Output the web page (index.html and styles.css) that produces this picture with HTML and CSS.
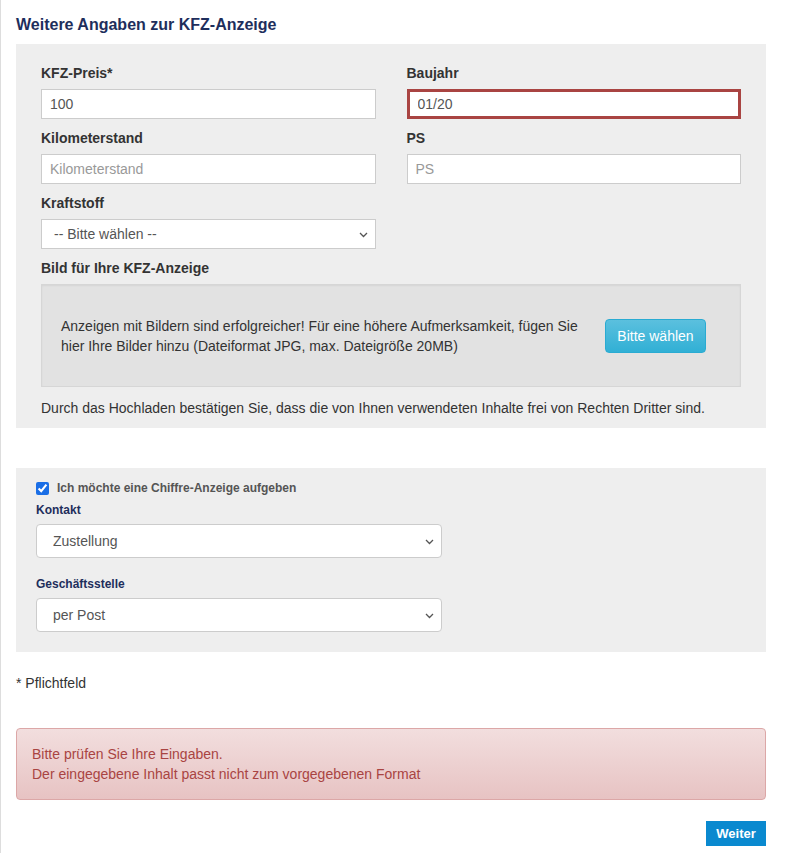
FILE: index.html
```html
<!DOCTYPE html>
<html lang="de">

<head>
    <meta charset="UTF-8">
    <meta name="viewport" content="width=device-width, initial-scale=1.0">
    <title>KFZ-Anzeige</title>
    <link rel="stylesheet" href="styles.css">
</head>

<body>
    <div class="seite">
        <h2 class="titel">Weitere Angaben zur KFZ-Anzeige</h2>

        <!-- Fahrzeugdaten -->
        <div class="panel panel-kfz">
            <div class="raster">
                <div class="feld">
                    <label>KFZ-Preis*</label>
                    <input type="text" value="100">
                </div>
                <div class="feld">
                    <label>Baujahr</label>
                    <input type="text" value="01/20" class="fehler">
                </div>
                <div class="feld">
                    <label>Kilometerstand</label>
                    <input type="text" placeholder="Kilometerstand">
                </div>
                <div class="feld">
                    <label>PS</label>
                    <input type="text" placeholder="PS">
                </div>
                <div class="feld">
                    <label>Kraftstoff</label>
                    <div class="auswahl">
                        <select>
                            <option>-- Bitte wählen --</option>
                            <option>Benzin</option>
                            <option>Diesel</option>
                            <option>Elektro</option>
                        </select>
                        <svg class="pfeil" width="9" height="6" viewBox="0 0 9 6"><path d="M1 1l3.5 3.5L8 1" fill="none" stroke="#555" stroke-width="1.3"/></svg>
                    </div>
                </div>
            </div>

            <label class="bild-label">Bild für Ihre KFZ-Anzeige</label>
            <div class="upload">
                <p>Anzeigen mit Bildern sind erfolgreicher! Für eine höhere Aufmerksamkeit, fügen Sie hier Ihre Bilder hinzu (Dateiformat JPG, max. Dateigröße 20MB)</p>
                <button class="btn-info">Bitte wählen</button>
            </div>
            <p class="hinweis">Durch das Hochladen bestätigen Sie, dass die von Ihnen verwendeten Inhalte frei von Rechten Dritter sind.</p>
        </div>

        <!-- Chiffre -->
        <div class="panel panel-chiffre">
            <label class="check">
                <input type="checkbox" checked>
                <span>Ich möchte eine Chiffre-Anzeige aufgeben</span>
            </label>

            <label class="klein-label">Kontakt</label>
            <div class="auswahl breit">
                <select>
                    <option>Zustellung</option>
                    <option>Abholung</option>
                </select>
                <svg class="pfeil" width="9" height="6" viewBox="0 0 9 6"><path d="M1 1l3.5 3.5L8 1" fill="none" stroke="#555" stroke-width="1.3"/></svg>
            </div>

            <label class="klein-label abstand">Geschäftsstelle</label>
            <div class="auswahl breit">
                <select>
                    <option>per Post</option>
                    <option>per E-Mail</option>
                </select>
                <svg class="pfeil" width="9" height="6" viewBox="0 0 9 6"><path d="M1 1l3.5 3.5L8 1" fill="none" stroke="#555" stroke-width="1.3"/></svg>
            </div>
        </div>

        <p class="pflicht">* Pflichtfeld</p>

        <div class="alert">
            Bitte prüfen Sie Ihre Eingaben.<br>
            Der eingegebene Inhalt passt nicht zum vorgegebenen Format
        </div>

        <div class="aktionen">
            <button class="btn-weiter">Weiter</button>
        </div>
    </div>
</body>

</html>
```

FILE: styles.css
```css
body {
    margin: 0;
    padding: 0;
    font-family: "Liberation Sans", Arial, sans-serif;
    font-size: 14px;
    color: #333;
    background-color: white;
}

.seite {
    border-left: 1px solid #ddd;
    padding: 15px 19px 8px 15px;
    min-height: 830px;
}

.titel {
    margin: 0 0 9px 0;
    font-size: 16px;
    line-height: 20px;
    color: #1e2e5c;
}

.panel {
    background-color: #eee;
}

.panel-kfz {
    padding: 20px 25px 10px 25px;
}

.raster {
    display: grid;
    grid-template-columns: 1fr 1fr;
    column-gap: 31px;
}

.feld {
    display: flex;
    flex-direction: column;
    margin-bottom: 10px;
}

.feld label,
.bild-label {
    display: block;
    font-weight: bold;
    font-size: 14px;
    line-height: 18px;
    color: #333;
    margin-bottom: 7px;
}

.feld input {
    box-sizing: border-box;
    height: 30px;
    padding: 0 8px;
    border: 1px solid #ccc;
    background-color: white;
    font-family: inherit;
    font-size: 14px;
    color: #555;
    outline: none;
}

.feld input::placeholder {
    color: #999;
}

.feld input.fehler {
    border: 3px solid #a94442;
    padding-left: 8px;
}

.auswahl {
    position: relative;
}

.auswahl select {
    appearance: none;
    box-sizing: border-box;
    width: 100%;
    height: 30px;
    padding: 0 12px;
    border: 1px solid #ccc;
    background-color: white;
    font-family: inherit;
    font-size: 14px;
    color: #555;
    outline: none;
}

.auswahl .pfeil {
    position: absolute;
    right: 8px;
    top: 50%;
    margin-top: -2px;
    pointer-events: none;
}

.upload {
    display: flex;
    align-items: center;
    gap: 12px;
    height: 103px;
    box-sizing: border-box;
    padding: 0 34px 0 19px;
    background-color: #e2e2e2;
    border: 1px solid #d6d6d6;
    box-shadow: inset 0 1px 2px rgba(0, 0, 0, 0.06);
}

.upload p {
    flex: 1;
    margin: 0;
    line-height: 20px;
    color: #333;
}

.btn-info {
    width: 101px;
    height: 34px;
    flex-shrink: 0;
    border: 1px solid #2aabd2;
    border-radius: 4px;
    background: linear-gradient(#5bc0de, #31b0d5);
    color: white;
    font-family: inherit;
    font-size: 14px;
    cursor: pointer;
}

.hinweis {
    margin: 11px 0 0 0;
    line-height: 20px;
}

.panel-chiffre {
    margin-top: 40px;
    padding: 12px 20px 20px 20px;
}

.check {
    display: flex;
    align-items: center;
    height: 16px;
    font-size: 12px;
    font-weight: bold;
    color: #555;
}

.check input {
    width: 13px;
    height: 13px;
    margin: 0 8px 0 0;
    accent-color: #1a6ee6;
}

.klein-label {
    display: block;
    margin-top: 6px;
    font-size: 12px;
    font-weight: bold;
    line-height: 16px;
    color: #1e2e5c;
}

.klein-label.abstand {
    margin-top: 18px;
}

.auswahl.breit {
    width: 406px;
    margin-top: 6px;
}

.auswahl.breit select {
    height: 34px;
    padding: 0 16px;
    border-radius: 4px;
}

.pflicht {
    margin: 21px 0 0 0;
    line-height: 20px;
}

.alert {
    margin-top: 35px;
    padding: 15px 15px;
    line-height: 20px;
    color: #a94442;
    background: linear-gradient(#f2dede, #e7c3c3);
    border: 1px solid #dca7a7;
    border-radius: 4px;
}

.aktionen {
    display: flex;
    justify-content: flex-end;
    margin-top: 21px;
}

.btn-weiter {
    width: 60px;
    height: 25px;
    border: none;
    background-color: #0a89cf;
    color: white;
    font-family: inherit;
    font-size: 13px;
    font-weight: bold;
    cursor: pointer;
}
```
